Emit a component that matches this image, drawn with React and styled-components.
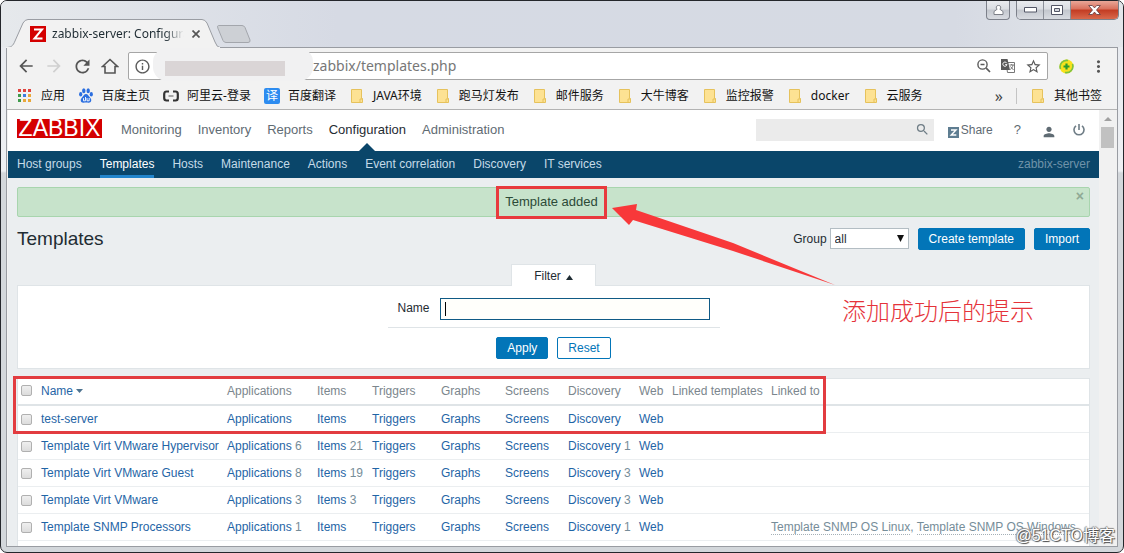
import React, { useState } from "react";
import styled, { createGlobalStyle, css } from "styled-components";
import {
  MdArrowBack,
  MdArrowForward,
  MdInfoOutline,
  MdMoreVert,
  MdPerson,
  MdRefresh,
  MdSearch,
  MdStarBorder,
} from "react-icons/md";

const mainNav = [
  "Monitoring",
  "Inventory",
  "Reports",
  "Configuration",
  "Administration",
];

const subNav = [
  "Host groups",
  "Templates",
  "Hosts",
  "Maintenance",
  "Actions",
  "Event correlation",
  "Discovery",
  "IT services",
];

const bookmarks = [
  { name: "应用", icon: <AppsIcon /> },
  { name: "百度主页", icon: <PawIcon /> },
  { name: "阿里云-登录", icon: <AliyunIcon /> },
  { name: "百度翻译", icon: <TranslateBadge /> },
  { name: "JAVA环境" },
  { name: "跑马灯发布" },
  { name: "邮件服务" },
  { name: "大牛博客" },
  { name: "监控报警" },
  { name: "docker" },
  { name: "云服务" },
];

const columns = [
  { name: "Applications", width: 90 },
  { name: "Items", width: 55 },
  { name: "Triggers", width: 69 },
  { name: "Graphs", width: 64 },
  { name: "Screens", width: 63 },
  { name: "Discovery", width: 71 },
  { name: "Web", width: 33 },
];

const templates = [
  { name: "test-server", counts: {}, linkedTo: [] },
  {
    name: "Template Virt VMware Hypervisor",
    counts: { Applications: 6, Items: 21, Discovery: 1 },
    linkedTo: [],
  },
  {
    name: "Template Virt VMware Guest",
    counts: { Applications: 8, Items: 19, Discovery: 3 },
    linkedTo: [],
  },
  {
    name: "Template Virt VMware",
    counts: { Applications: 3, Items: 3, Discovery: 3 },
    linkedTo: [],
  },
  {
    name: "Template SNMP Processors",
    counts: { Applications: 1, Discovery: 1 },
    linkedTo: ["Template SNMP OS Linux", "Template SNMP OS Windows"],
  },
];

export default function App() {
  const [name, setName] = useState("");
  const [checked, setChecked] = useState([]);

  function toggle(item) {
    setChecked((p) =>
      p.includes(item) ? p.filter((i) => i !== item) : [...p, item]
    );
  }

  function toggleAll() {
    setChecked((p) =>
      p.length === templates.length ? [] : templates.map((i) => i.name)
    );
  }

  return (
    <>
      <GlobalStyle />
      <Window>
        <TitleBar />
        <Browser>
          <Toolbar />
          <Bookmarks />
          <Viewport>
            <Page>
              <Header />
              <Main>
                <Message role="status">
                  <MessageText>
                    Template added
                    <Arrow />
                  </MessageText>
                  <MessageClose aria-label="Close">×</MessageClose>
                </Message>

                <TitleRow>
                  <h1>Templates</h1>
                  <Actions>
                    <label htmlFor="group">Group</label>
                    <SelectWrapper>
                      <select id="group" defaultValue="all">
                        <option value="all">all</option>
                      </select>
                      <svg width="7" height="7" viewBox="0 0 7 7">
                        <path d="M0 0h7L3.5 7z" fill="#111" />
                      </svg>
                    </SelectWrapper>
                  </Actions>
                  <Button $primary>Create template</Button>
                  <Button $primary>Import</Button>
                </TitleRow>

                <FilterTab>
                  Filter
                  <svg width="7" height="5" viewBox="0 0 7 5">
                    <path d="M0 5h7L3.5 0z" fill="#1f2c33" />
                  </svg>
                </FilterTab>
                <FilterPanel onSubmit={(e) => e.preventDefault()}>
                  <FilterRow>
                    <label htmlFor="name">Name</label>
                    <InputWrapper>
                      <input
                        id="name"
                        value={name}
                        onChange={(e) => setName(e.target.value)}
                      />
                    </InputWrapper>
                  </FilterRow>
                  <FilterButtons>
                    <Button $primary type="submit">
                      Apply
                    </Button>
                    <Button type="button" onClick={() => setName("")}>
                      Reset
                    </Button>
                  </FilterButtons>
                  <Note>添加成功后的提示</Note>
                </FilterPanel>

                <TableCard>
                  <Table>
                    <colgroup>
                      <Col $width={18} />
                      <Col $width={186} />
                      {columns.map((i) => (
                        <Col key={i.name} $width={i.width} />
                      ))}
                      <Col $width={99} />
                      <col />
                    </colgroup>
                    <thead>
                      <tr>
                        <th>
                          <Checkbox
                            aria-label="Select all"
                            checked={checked.length === templates.length}
                            onChange={toggleAll}
                          />
                        </th>
                        <th>
                          <SortLink href="#name">
                            Name
                            <svg width="7" height="4" viewBox="0 0 7 4">
                              <path d="M0 0h7L3.5 4z" fill="#4d7390" />
                            </svg>
                          </SortLink>
                        </th>
                        {columns.map((i) => (
                          <th key={i.name}>{i.name}</th>
                        ))}
                        <th>Linked templates</th>
                        <th>Linked to</th>
                      </tr>
                    </thead>
                    <tbody>
                      {templates.map((t) => (
                        <tr key={t.name}>
                          <td>
                            <Checkbox
                              aria-label={t.name}
                              checked={checked.includes(t.name)}
                              onChange={() => toggle(t.name)}
                            />
                          </td>
                          <td>
                            <a href="#template">{t.name}</a>
                          </td>
                          {columns.map((i) => (
                            <td key={i.name}>
                              <a href="#list">{i.name}</a> {t.counts[i.name]}
                            </td>
                          ))}
                          <td />
                          <td>
                            {t.linkedTo.map((i, index) => (
                              <React.Fragment key={i}>
                                {index > 0 && ", "}
                                <GreyLink href="#linked">{i}</GreyLink>
                              </React.Fragment>
                            ))}
                          </td>
                        </tr>
                      ))}
                    </tbody>
                  </Table>
                </TableCard>
              </Main>
            </Page>
            <Scrollbar>
              <svg width="8" height="4" viewBox="0 0 8 4">
                <path d="M0 4h8L4 0z" fill="#a0a0a0" />
              </svg>
              <Thumb />
            </Scrollbar>
          </Viewport>
        </Browser>
        <Watermark>@51CTO博客</Watermark>
      </Window>
    </>
  );
}

function TitleBar() {
  return (
    <StyledTitleBar>
      <Tab>
        <svg className="shape" width="214" height="29" viewBox="0 0 214 29">
          <path
            d="M0 28.5C5 28.5 7 27 9 22L17 4Q19 .5 22 .5H196Q199 .5 201 4L209 23Q211 28.5 214 28.5"
            fill="#f2f2f2"
            stroke="#9a9da3"
          />
          <path d="M0 28.5H214" stroke="#f2f2f2" />
        </svg>
        <svg width="16" height="16" viewBox="0 0 16 16">
          <path d="M0 0h16v16H0z" fill="#d40000" />
          <path d="M4 3.5h8L4.500 12.500h8" fill="none" stroke="#fff" strokeWidth="2" />
        </svg>
        <span>zabbix-server: Configuration</span>
        <button aria-label="Close tab">
          <svg width="8" height="8" viewBox="0 0 8 8">
            <path d="M.5.5l7 7M7.500.5l-7 7" stroke="#555" strokeWidth="1.700" />
          </svg>
        </button>
      </Tab>
      <NewTab aria-label="New tab">
        <svg width="34" height="18" viewBox="0 0 34 18">
          <path
            d="M1.500.5H25Q27 .5 28 2.500L33 15Q33.500 17.500 31 17.500H9Q7 17.500 6 15.500L.8 3Q0 .5 1.500.5z"
            fill="#cdd0d5"
            stroke="#a3a6ac"
          />
        </svg>
      </NewTab>
      <UserButton aria-label="User">
        <svg width="11" height="10" viewBox="0 0 11 10">
          <path
            d="M5.500.5a2 2 0 0 1 1.300 3.700L10 6.500v3H1v-3l3.200-2.300A2 2 0 0 1 5.500.5z"
            fill="#fff"
            stroke="#7d8088"
          />
        </svg>
      </UserButton>
      <WindowButtons>
        <button aria-label="Minimize">
          <svg width="13" height="6" viewBox="0 0 13 6">
            <path d="M.5.5h12v4.500H.5z" fill="#fff" stroke="#535666" />
          </svg>
        </button>
        <button aria-label="Maximize">
          <svg width="12" height="10" viewBox="0 0 12 10">
            <path d="M.5.5h11v9H.5z" fill="#fff" stroke="#535666" />
            <path d="M3.500 3.500h5v3h-5z" fill="#d5d8de" stroke="#535666" />
          </svg>
        </button>
        <button className="close" aria-label="Close">
          <svg width="13" height="10" viewBox="0 0 13 10">
            <path
              d="M.7.5h3.600l2.200 2.400L8.700.5h3.600L8.500 5l3.800 4.500H8.700L6.500 7.100 4.300 9.500H.7L4.500 5z"
              fill="#fff"
              stroke="#5d3b3f"
              strokeWidth=".8"
            />
          </svg>
        </button>
      </WindowButtons>
    </StyledTitleBar>
  );
}

function Toolbar() {
  return (
    <StyledToolbar>
      <ToolButton aria-label="Back">
        <MdArrowBack size={20} />
      </ToolButton>
      <ToolButton aria-label="Forward" disabled>
        <MdArrowForward size={20} />
      </ToolButton>
      <ToolButton aria-label="Reload">
        <MdRefresh size={21} />
      </ToolButton>
      <ToolButton aria-label="Home">
        <svg width="18" height="16" viewBox="0 0 18 16">
          <path
            d="M1.500 8.500L9 1.500l7.500 7H14V15H4V8.500z"
            fill="none"
            stroke="#555"
            strokeWidth="1.600"
          />
        </svg>
      </ToolButton>
      <Omnibox>
        <MdInfoOutline size={17} />
        <Smudge />
        <input aria-label="Address" defaultValue="zabbix/templates.php" />
        <svg width="14" height="14" viewBox="0 0 14 14">
          <path
            d="M9.200 9.200L13 13M3.500 5.500h4"
            fill="none"
            stroke="#5a5a5a"
            strokeWidth="1.700"
          />
          <circle cx="5.500" cy="5.500" r="4.600" fill="none" stroke="#5a5a5a" strokeWidth="1.400" />
        </svg>
        <svg width="14" height="14" viewBox="0 0 14 14">
          <path d="M5 3.500h8.500v10H6.500z" fill="#fff" stroke="#777" />
          <path d="M0 0h6.500l2.500 11H0z" fill="#5a5a5a" />
          <path
            d="M5.800 4.200A2.100 2.100 0 1 0 6 5.600H4.200"
            fill="none"
            stroke="#fff"
          />
          <path
            d="M8.500 6h4.500M10.700 5v1M12 6c-.3 2-1.300 3.500-2.800 4.500M9.500 7.500l3 3.500"
            fill="none"
            stroke="#777"
          />
        </svg>
        <MdStarBorder size={17} />
      </Omnibox>
      <Extension aria-label="Extension">
        <svg width="15" height="15" viewBox="0 0 15 15">
          <circle cx="7.500" cy="7.500" r="7" fill="#f7e21c" />
          <path
            d="M1.500 10A6.500 6.500 0 0 1 9 1.500M13.500 5A6.500 6.500 0 0 1 6 13.500"
            fill="none"
            stroke="#7cc243"
            strokeWidth="1.600"
          />
          <path d="M7.500 4.500v6M4.500 7.500h6" stroke="#2c9a2e" strokeWidth="2.200" />
        </svg>
      </Extension>
      <Extension aria-label="Menu">
        <MdMoreVert size={19} />
      </Extension>
    </StyledToolbar>
  );
}

function Bookmarks() {
  return (
    <StyledBookmarks>
      {bookmarks.map((i) => (
        <a key={i.name} href="#bookmark">
          <i>{i.icon || <FolderIcon />}</i>
          {i.name}
        </a>
      ))}
      <More aria-label="More bookmarks">»</More>
      <Separator />
      <a href="#other">
        <i>
          <FolderIcon />
        </i>
        其他书签
      </a>
    </StyledBookmarks>
  );
}

function Header() {
  return (
    <header>
      <TopBar>
        <Logo href="#home">ZABBIX</Logo>
        <MainNav>
          {mainNav.map((i) => (
            <MainLink key={i} href="#nav" $active={i === "Configuration"}>
              {i}
            </MainLink>
          ))}
        </MainNav>
        <Search>
          <input aria-label="Search" />
          <MdSearch size={15} />
        </Search>
        <Tools>
          <a href="#share">
            <svg width="11" height="11" viewBox="0 0 11 11">
              <path d="M0 0h11v11H0z" fill="#5e7d91" />
              <path d="M3 3h5L3.200 8H8.300" fill="none" stroke="#fff" strokeWidth="1.400" />
            </svg>
            Share
          </a>
          <a className="help" href="#help">
            ?
          </a>
          <a className="user" href="#profile" aria-label="Profile">
            <MdPerson size={16} />
          </a>
          <a href="#logout" aria-label="Sign out">
            <svg width="12" height="12" viewBox="0 0 12 12">
              <path
                d="M3 1.800a5 5 0 1 0 6 0M6 0v6"
                fill="none"
                stroke="#6f7d86"
                strokeWidth="1.600"
              />
            </svg>
          </a>
        </Tools>
      </TopBar>
      <SubNav>
        {subNav.map((i) => (
          <SubLink key={i} href="#sub" $active={i === "Templates"}>
            {i}
          </SubLink>
        ))}
        <ServerName>zabbix-server</ServerName>
      </SubNav>
    </header>
  );
}

function AppsIcon() {
  const colors = [
    "#e0443e", "#e0443e", "#e0443e",
    "#3f9b4b", "#3f7de0", "#e9a83a",
    "#3f9b4b", "#e9a83a", "#e9a83a",
  ];
  return (
    <svg width="14" height="14" viewBox="0 0 14 14">
      {colors.map((c, i) => (
        <rect
          key={i}
          x={(i % 3) * 5}
          y={Math.floor(i / 3) * 5}
          width="3"
          height="3"
          fill={c}
        />
      ))}
    </svg>
  );
}

function PawIcon() {
  return (
    <svg width="14" height="15" viewBox="0 0 14 15" fill="#2c6fe0">
      <ellipse cx="4.800" cy="2.700" rx="1.700" ry="2.500" />
      <ellipse cx="9.200" cy="2.700" rx="1.700" ry="2.500" />
      <ellipse cx="1.700" cy="6.200" rx="1.600" ry="2.200" />
      <ellipse cx="12.300" cy="6.200" rx="1.600" ry="2.200" />
      <path d="M7 6c2 0 2.500 2 4 3.500 2.500 2.500 1 5.500-1.500 5.200-1.700-.2-3.300-.2-5 0C2 15 .5 12 3 9.500 4.500 8 5 6 7 6z" />
      <path
        d="M4.500 10.200v2.600H6.500V9M8 10v2.800h2.200V10"
        fill="none"
        stroke="#fff"
        strokeWidth=".9"
      />
    </svg>
  );
}

function AliyunIcon() {
  return (
    <svg width="16" height="12" viewBox="0 0 16 12">
      <path
        d="M6 1.500H3.500Q1.200 1.500 1.200 4v4q0 2.500 2.300 2.500H6M10 1.500h2.500q2.300 0 2.300 2.500v4q0 2.500-2.300 2.500H10"
        fill="none"
        stroke="#333"
        strokeWidth="2.200"
      />
      <path d="M5.500 6h5" stroke="#333" strokeWidth=".8" />
    </svg>
  );
}

function TranslateBadge() {
  return <Badge>译</Badge>;
}

function FolderIcon() {
  return (
    <svg width="13" height="14" viewBox="0 0 13 14">
      <path d="M1.500.5h10v9h1v4h-11z" fill="#fde293" stroke="#e6c25c" />
      <path d="M10 13.500V10h2.500" fill="none" stroke="#e6c25c" />
    </svg>
  );
}

function Arrow() {
  return (
    <StyledArrow width="224" height="82" viewBox="0 0 224 82">
      <path d="M0 5l25-4-1 6 97 33 102 42-102-34L21 17l-4 5z" fill="#f8383a" />
    </StyledArrow>
  );
}

const GlobalStyle = createGlobalStyle`
  *,
  *::before,
  *::after {
    box-sizing: border-box;
  }

  body {
    margin: 0px;
    background-color: #fff;
    font-family: "Liberation Sans", Arial, "Noto Sans CJK SC", sans-serif;
    font-size: 12px;
    line-height: 16px;
    color: #1f2c33;
  }

  button,
  input,
  select {
    margin: 0px;
    padding: 0px;
    border: none;
    background: none;
    font: inherit;
    color: inherit;
    outline: none;
  }

  a {
    color: inherit;
    text-decoration: none;
  }

  svg {
    display: block;
    flex-shrink: 0;
  }
`;

const Window = styled.div`
  position: relative;
  height: 100vh;
  padding: 0px 5px 5px;
  display: flex;
  flex-direction: column;
  border: 1px solid #24262b;
  border-radius: 7px;
  background: linear-gradient(#e6e9ee, #eef0f3 170px, #d3d7db 172px, #d3d7db);
`;

const StyledTitleBar = styled.div`
  height: 46px;
  margin: 0px -5px;
  padding: 0px 4px 0px 5px;
  display: flex;
  align-items: flex-end;
  border-radius: 6px 6px 0px 0px;
  background: linear-gradient(90deg, #e6e9ec, #d6dae4 30%, #d6dae3 85%, #e3e6ea);
`;

const Tab = styled.div`
  position: relative;
  z-index: 1;
  width: 214px;
  height: 29px;
  margin-bottom: -1px;
  padding: 0px 14px 0px 24px;
  display: flex;
  align-items: center;
  font-family: "Noto Sans", sans-serif;
  font-size: 12px;

  .shape {
    position: absolute;
    inset: 0px;
    z-index: -1;
  }

  span {
    width: 132px;
    margin: 0px 8px 0px 6px;
    overflow: hidden;
    white-space: nowrap;
    mask-image: linear-gradient(90deg, #000 85%, transparent);
  }
`;

const NewTab = styled.button`
  margin: 0px auto 4px -3px;
`;

const glass = css`
  height: 19px;
  display: flex;
  align-items: center;
  justify-content: center;
  background: linear-gradient(#e9ebef, #dadde2 45%, #c3c7ce 50%, #d8dbe1);
`;

const UserButton = styled.button`
  ${glass}
  width: 24px;
  margin-right: 6px;
  align-self: flex-start;
  border: 1px solid #7c808a;
  border-top: none;
  border-radius: 0px 0px 4px 4px;
`;

const WindowButtons = styled.div`
  align-self: flex-start;
  display: flex;
  border: 1px solid #7c808a;
  border-top: none;
  border-radius: 0px 0px 5px 5px;
  overflow: hidden;

  button {
    ${glass}
    width: 27px;
    height: 18px;
    border-right: 1px solid #8b8f98;
  }

  .close {
    width: 47px;
    border-right: none;
    background: linear-gradient(#e9a798, #d9705c 45%, #c23b22 50%, #d9694c);
  }
`;

const Browser = styled.div`
  flex: 1;
  min-height: 0px;
  display: flex;
  flex-direction: column;
  border: 1px solid #999ca2;
  background-color: #f2f2f2;
`;

const StyledToolbar = styled.div`
  height: 34px;
  padding: 4px 3px 2px 5px;
  display: flex;
  align-items: center;
`;

const ToolButton = styled.button`
  width: 28px;
  display: flex;
  justify-content: center;
  color: #555;

  &:disabled {
    color: #d0d0d0;
  }
`;

const Omnibox = styled.div`
  position: relative;
  flex: 1;
  height: 28px;
  margin: 0px 2px 0px 4px;
  padding: 0px 5px;
  display: flex;
  align-items: center;
  gap: 10px;
  border: 1px solid #a6a6a6;
  border-radius: 2px;
  background-color: #fff;
  color: #5a5a5a;

  input {
    flex: 1;
    min-width: 0px;
    padding-left: 152px;
    font-family: "Noto Sans", sans-serif;
    font-size: 14px;
    line-height: 20px;
    color: #777;
  }
`;

/* hides the host part of the address */
const Smudge = styled.div`
  position: absolute;
  top: -5px;
  left: 24px;
  width: 160px;
  height: 33px;
  border-radius: 14px;
  background-color: #f1f1f2;

  &::after {
    content: "";
    position: absolute;
    top: 13px;
    left: 12px;
    width: 120px;
    height: 15px;
    background-color: #dad5d6;
  }
`;

const Extension = styled.button`
  width: 32px;
  display: flex;
  justify-content: center;
  color: #555;
`;

const StyledBookmarks = styled.nav`
  height: 28px;
  padding: 0px 15px 0px 10px;
  display: flex;
  align-items: center;
  gap: 13px;
  border-bottom: 1px solid #b3b3b3;
  font-family: "Noto Sans", "Noto Sans CJK SC", sans-serif;
  white-space: nowrap;
  color: #111;

  a {
    display: flex;
    align-items: center;
    gap: 8px;
  }

  i {
    width: 16px;
    display: flex;
    justify-content: center;
    font-style: normal;
  }
`;

const Badge = styled.span`
  width: 16px;
  border-radius: 2px;
  background-color: #2d8cf0;
  text-align: center;
  color: #fff;
`;

const More = styled.button`
  margin-left: auto;
  font-size: 16px;
  color: #444;
`;

const Separator = styled.span`
  width: 1px;
  height: 16px;
  background-color: #c4c4c4;
`;

const Viewport = styled.div`
  flex: 1;
  min-height: 0px;
  padding-left: 1px;
  display: flex;
  overflow: hidden;
`;

const Page = styled.div`
  flex: 1;
  min-width: 0px;
  display: flex;
  flex-direction: column;
  background-color: #ebeef0;
`;

const Scrollbar = styled.div`
  width: 18px;
  padding: 7px 3px 0px 2px;
  display: flex;
  flex-direction: column;
  align-items: center;
  gap: 6px;
  background-color: #f1f1f1;
`;

const Thumb = styled.div`
  width: 13px;
  height: 21px;
  background-color: #c1c1c1;
`;

const TopBar = styled.div`
  height: 41px;
  padding: 0px 14px 0px 9px;
  display: flex;
  align-items: center;
  background-color: #fff;
  font-size: 13px;
`;

const Logo = styled.a`
  width: 85px;
  height: 19px;
  margin-bottom: 4px;
  background-color: #d40000;
  text-align: center;
  font-size: 23px;
  line-height: 19px;
  color: #fff;
`;

const MainNav = styled.nav`
  height: 41px;
  margin-left: 19px;
  display: flex;
  gap: 16px;
`;

const MainLink = styled.a`
  position: relative;
  line-height: 39px;
  color: ${(p) => (p.$active ? "#1f2c33" : "#5f6b73")};

  ${(p) =>
    p.$active &&
    css`
      &::after {
        content: "";
        position: absolute;
        bottom: 0px;
        left: calc(50% - 8px);
        border: 8px solid transparent;
        border-top: none;
        border-bottom-color: #0a466a;
      }
    `}
`;

const Search = styled.div`
  width: 178px;
  height: 22px;
  margin: 0px 14px 2px auto;
  padding-right: 4px;
  display: flex;
  align-items: center;
  background-color: #ebebeb;
  color: #6f7d86;

  input {
    flex: 1;
    min-width: 0px;
  }
`;

const Tools = styled.div`
  margin-bottom: 2px;
  display: flex;
  align-items: center;
  font-size: 12px;
  color: #5f6b73;

  a {
    display: flex;
    align-items: center;
    gap: 2px;
  }

  a:first-child svg {
    margin-top: 5px;
  }

  .help {
    margin: 0px 20px 0px 21px;
    font-size: 13px;
  }

  .user {
    margin: 4px 16px 0px 0px;
  }
`;

const SubNav = styled.nav`
  height: 27px;
  padding: 0px 9px;
  display: flex;
  gap: 18px;
  background-color: #0a466a;
`;

const SubLink = styled.a`
  line-height: 26px;
  border-bottom: 3px solid ${(p) => (p.$active ? "#2285cc" : "transparent")};
  color: ${(p) => (p.$active ? "#fff" : "#c5dbe8")};
`;

const ServerName = styled.span`
  margin-left: auto;
  line-height: 26px;
  color: #6f93a9;
`;

const Main = styled.main`
  flex: 1;
  min-height: 0px;
  padding: 9px 9px 0px;
  display: flex;
  flex-direction: column;
`;

const Message = styled.div`
  position: relative;
  height: 30px;
  padding-right: 4px;
  flex-shrink: 0;
  display: flex;
  align-items: center;
  justify-content: center;
  border: 1px solid #a8d5ae;
  border-radius: 2px;
  background-color: #c7e3cb;
  font-size: 13px;
  color: #2c4a37;
`;

const MessageText = styled.span`
  position: relative;

  &::after {
    content: "";
    position: absolute;
    inset: -8px -9px -9px;
    border: 3px solid #e83a3d;
  }
`;

const StyledArrow = styled.svg`
  position: absolute;
  top: 9px;
  left: calc(100% + 14px);
  z-index: 1;
`;

const MessageClose = styled.button`
  position: absolute;
  top: 0px;
  right: 5px;
  font-size: 14px;
  font-weight: 700;
  color: #8fa995;
`;

const TitleRow = styled.div`
  height: 21px;
  margin: 11px 0px 15px;
  flex-shrink: 0;
  display: flex;
  align-items: center;
  gap: 9px;

  h1 {
    margin: 0px auto 0px 0px;
    font-size: 19px;
    font-weight: 400;
  }
`;

const Actions = styled.div`
  display: flex;
  align-items: center;
  gap: 3px;
`;

const SelectWrapper = styled.div`
  position: relative;

  select {
    width: 79px;
    height: 21px;
    padding: 0px 4px;
    appearance: none;
    border: 1px solid #b3bdc3;
    background-color: #fff;
  }

  svg {
    position: absolute;
    top: 7px;
    right: 5px;
    pointer-events: none;
  }
`;

const Button = styled.button`
  height: 22px;
  padding: 0px 10px;
  border: 1px solid #0275b8;
  border-radius: 2px;
  background-color: ${(p) => (p.$primary ? "#0275b8" : "#fff")};
  color: ${(p) => (p.$primary ? "#fff" : "#0275b8")};
  cursor: pointer;
`;

const FilterTab = styled.button`
  width: 85px;
  height: 22px;
  margin-bottom: -1px;
  flex-shrink: 0;
  align-self: center;
  position: relative;
  z-index: 1;
  display: flex;
  align-items: center;
  justify-content: center;
  gap: 5px;
  border: 1px solid #dfe4e7;
  border-bottom: none;
  background-color: #fff;

  svg {
    margin-top: 3px;
  }
`;

const FilterPanel = styled.form`
  position: relative;
  flex-shrink: 0;
  padding: 12px 0px 9px;
  display: flex;
  flex-direction: column;
  align-items: center;
  border: 1px solid #dfe4e7;
  background-color: #fff;
`;

const FilterRow = styled.div`
  width: 332px;
  padding: 0px 10px 7px;
  display: flex;
  justify-content: flex-end;
  gap: 10px;
  border-bottom: 1px solid #dfe4e7;

  label {
    line-height: 20px;
  }
`;

const InputWrapper = styled.div`
  position: relative;

  input {
    width: 270px;
    height: 22px;
    padding: 0px 5px;
    border: 1px solid #0f5a85;
    background-color: #fffffb;
  }

  &::before {
    content: "";
    position: absolute;
    top: 4px;
    left: 5px;
    width: 1px;
    height: 14px;
    background-color: #000;
  }
`;

const FilterButtons = styled.div`
  margin-top: 9px;
  display: flex;
  gap: 9px;
`;

const Note = styled.p`
  position: absolute;
  top: 8px;
  right: 55px;
  margin: 0px;
  font-family: "Noto Sans CJK SC", sans-serif;
  font-size: 24px;
  font-weight: 300;
  line-height: 32px;
  color: #e5333a;
`;

const TableCard = styled.div`
  position: relative;
  flex: 1 0 auto;
  margin-top: 9px;
  border: 1px solid #dfe4e7;
  border-bottom: none;
  background-color: #fff;

  /* red frame round the header and the new template */
  &::after {
    content: "";
    position: absolute;
    top: -3px;
    left: -5px;
    width: 813px;
    height: 58px;
    border: 3px solid #e23c40;
    pointer-events: none;
  }
`;

const Table = styled.table`
  width: 100%;
  table-layout: fixed;
  border-collapse: separate;
  border-spacing: 0px;
  color: #768d99;

  th,
  td {
    height: 27px;
    padding: 0px 5px;
    text-align: left;
    font-weight: 400;
    white-space: nowrap;
    border-bottom: 1px solid #ebeef0;
  }

  th {
    padding-bottom: 2px;
    border-bottom: 2px solid #dfe4e7;
    color: #7b868d;
  }

  th:first-child,
  td:first-child {
    padding-left: 3px;
    padding-right: 3px;
  }

  a {
    color: #1f65a6;
  }
`;

const Col = styled.col`
  width: ${(p) => p.$width}px;
`;

const SortLink = styled.a`
  display: flex;
  align-items: center;
  gap: 3px;
`;

const GreyLink = styled.a`
  && {
    border-bottom: 1px dotted #a5b0b7;
    color: #768d99;
  }
`;

const Checkbox = styled.input.attrs({ type: "checkbox" })`
  width: 11px;
  height: 11px;
  display: block;
  appearance: none;
  border: 1px solid #b0b0b0;
  border-radius: 2px;
  background: linear-gradient(#efefef, #dcdcdc);

  &:checked {
    background: #0275b8;
  }
`;

const Watermark = styled.span`
  position: absolute;
  right: 8px;
  bottom: 4px;
  font-size: 16px;
  line-height: 24px;
  color: #fff;
  text-shadow: 1px 1px 1px #444, -1px 0px 1px #777, 0px -1px 1px #888;
`;
